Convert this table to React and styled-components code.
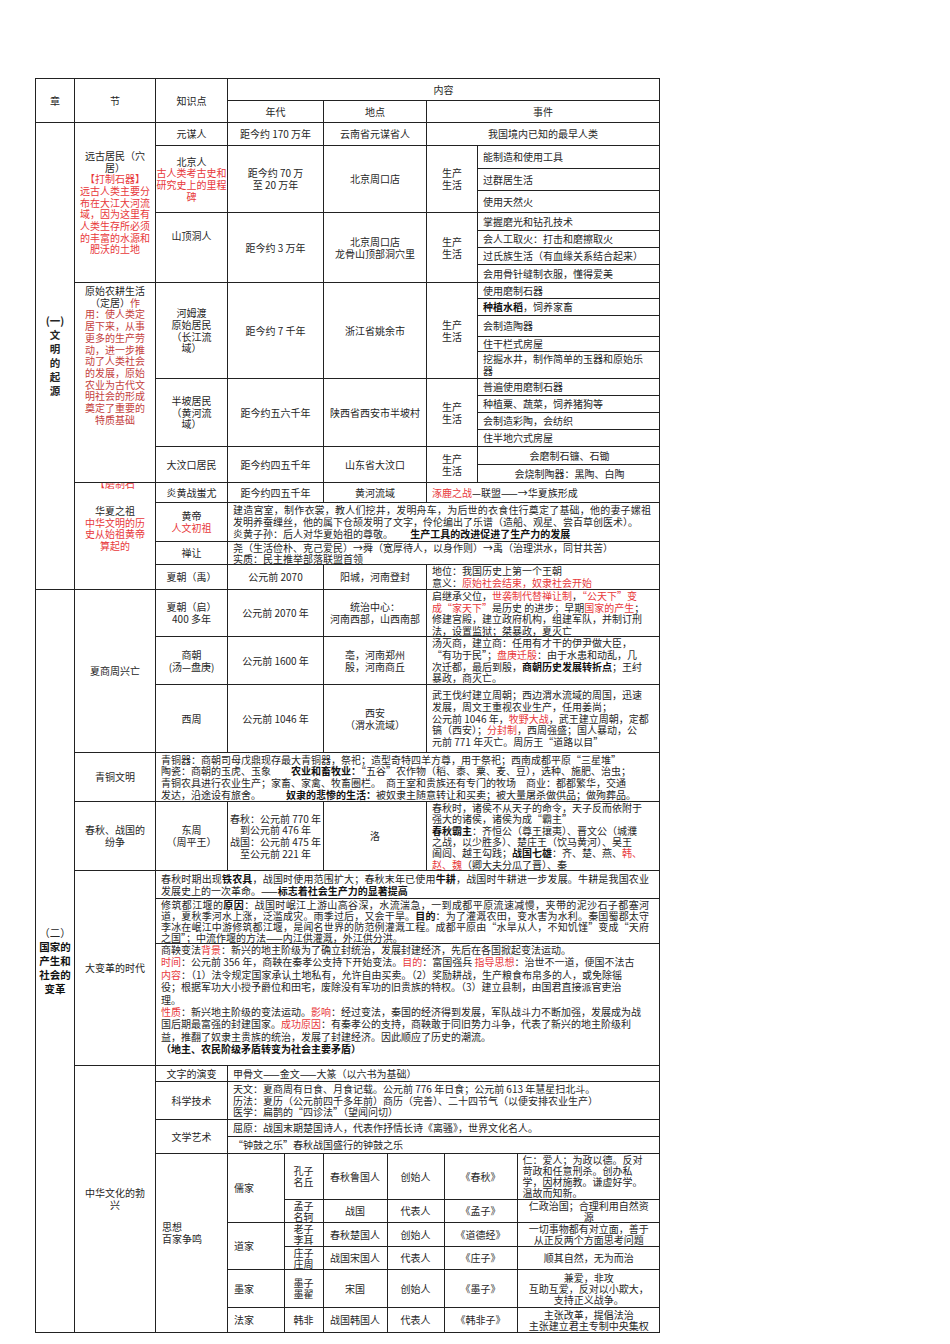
import React from 'react'
import styled, { createGlobalStyle } from 'styled-components'

const GlobalStyle = createGlobalStyle`
  html, body {
    margin: 0;
    padding: 0;
    background: #fff;
  }
  body {
    font-family: "Noto Sans CJK SC", "Noto Sans", sans-serif;
    color: #262626;
  }
`

const Page = styled.div`
  width: 950px;
  min-height: 1344px;
  box-sizing: border-box;
  padding: 78px 0 0 35px;
`

const Sheet = styled.table`
  width: 624px;
  table-layout: fixed;
  border-collapse: collapse;
  font-size: 10px;
  line-height: 11.7px;
`

const Inner = styled(Sheet)`
  width: 100%;
  border-style: hidden;
  line-height: 11px;
`

const Col = styled.col`
  width: ${p => p.$w}px;
`

const Row = styled.tr`
  height: ${p => p.$h}px;
`

const Cell = styled.td`
  border: 1px solid #222;
  padding: ${p => p.$pad || '0 4px'};
  text-align: ${p => p.$align || 'center'};
  vertical-align: ${p => p.$valign || 'middle'};
  line-height: ${p => p.$lh || 'inherit'};
  white-space: ${p => (p.$nowrap ? 'nowrap' : 'normal')};
  font-weight: 400;
  overflow: hidden;
`

const Item = styled(Cell)`
  text-align: ${p => p.$align || 'left'};
  padding: ${p => p.$pad || '0 3px 0 5px'};
`

const Para = styled(Cell)`
  text-align: justify;
  padding: ${p => p.$pad || '0 10px 0 5px'};
`

const Holder = styled(Cell)`
  padding: 0;
  vertical-align: top;
`

const Chapter = styled(Cell)`
  font-size: 10.5px;
  line-height: 14px;
  font-weight: ${p => (p.$bold ? 700 : 400)};
  padding: 0 2px;
`

const Red = styled.span`
  color: ${p => (p.$dark ? '#c4403d' : '#e8383b')};
`

const B = styled.b`
  font-weight: 700;
  color: #111;
`

const Torn = styled.div`
  height: 6px;
  overflow: hidden;
  text-align: center;
  color: #e8383b;

  & > span {
    display: block;
    margin-top: -5px;
  }
`

const Lead = styled.div`
  margin-top: 16px;
`

const Life = () => (
  <>
    生产<br />生活
  </>
)

const Thoughts = () => (
  <Inner>
    <colgroup>
      <Col $w={56} />
      <Col $w={39} />
      <Col $w={64} />
      <Col $w={57} />
      <Col $w={73} />
      <Col $w={143} />
    </colgroup>
    <tbody>
      <Row $h={45}>
        <Cell rowSpan={2} $align='left' $pad='0 6px'>儒家</Cell>
        <Cell $pad='0'>孔子<br />名丘</Cell>
        <Cell>春秋鲁国人</Cell>
        <Cell>创始人</Cell>
        <Cell>《春秋》</Cell>
        <Cell $align='left' $pad='0 4px 0 5px' $nowrap>
          仁：爱人；为政以德。反对<br />
          苛政和任意刑杀。创办私<br />
          学，因材施教。谦虚好学。<br />
          温故而知新。
        </Cell>
      </Row>
      <Row $h={23}>
        <Cell $pad='0'>孟子<br />名轲</Cell>
        <Cell>战国</Cell>
        <Cell>代表人</Cell>
        <Cell>《孟子》</Cell>
        <Cell $pad='0 2px'>仁政治国；合理利用自然资<br />源</Cell>
      </Row>
      <Row $h={24}>
        <Cell rowSpan={2} $align='left' $pad='0 6px'>道家</Cell>
        <Cell $pad='0'>老子<br />李耳</Cell>
        <Cell>春秋楚国人</Cell>
        <Cell>创始人</Cell>
        <Cell>《道德经》</Cell>
        <Cell $pad='0 2px'>一切事物都有对立面，善于<br />从正反两个方面思考问题</Cell>
      </Row>
      <Row $h={23}>
        <Cell $pad='0'>庄子<br />庄周</Cell>
        <Cell>战国宋国人</Cell>
        <Cell>代表人</Cell>
        <Cell>《庄子》</Cell>
        <Cell>顺其自然，无为而治</Cell>
      </Row>
      <Row $h={38}>
        <Cell $align='left' $pad='0 6px'>墨家</Cell>
        <Cell $pad='0'>墨子<br />墨翟</Cell>
        <Cell>宋国</Cell>
        <Cell>创始人</Cell>
        <Cell>《墨子》</Cell>
        <Cell $pad='0 2px'>兼爱，非攻<br />互助互爱，反对以小欺大，<br />支持正义战争。</Cell>
      </Row>
      <Row $h={25}>
        <Cell $align='left' $pad='0 6px'>法家</Cell>
        <Cell $pad='0'>韩非</Cell>
        <Cell>战国韩国人</Cell>
        <Cell>代表人</Cell>
        <Cell>《韩非子》</Cell>
        <Cell $pad='0 2px'>主张改革，提倡法治<br />主张建立君主专制中央集权</Cell>
      </Row>
    </tbody>
  </Inner>
)

const App = () => (
  <Page>
    <GlobalStyle />
    <Sheet>
      <colgroup>
        <Col $w={39} />
        <Col $w={81} />
        <Col $w={72} />
        <Col $w={96} />
        <Col $w={103} />
        <Col $w={51} />
        <Col $w={182} />
      </colgroup>
      <thead>
        <Row $h={22}>
          <Cell as='th' rowSpan={2}>章</Cell>
          <Cell as='th' rowSpan={2}>节</Cell>
          <Cell as='th' rowSpan={2}>知识点</Cell>
          <Cell as='th' colSpan={4}>内容</Cell>
        </Row>
        <Row $h={22}>
          <Cell as='th'>年代</Cell>
          <Cell as='th'>地点</Cell>
          <Cell as='th' colSpan={2}>事件</Cell>
        </Row>
      </thead>
      <tbody>
        {/* (一) 文明的起源 */}
        <Row $h={23}>
          <Chapter rowSpan={23} $bold>(一)<br />文<br />明<br />的<br />起<br />源</Chapter>
          <Cell rowSpan={8} $pad='0 3px'>
            远古居民（穴居）<br />
            <Red>【打制石器】</Red><br />
            <Red>远古人类主要分布在大江大河流域，因为这里有人类生存所必须的丰富的水源和肥沃的土地</Red>
          </Cell>
          <Cell>元谋人</Cell>
          <Cell>距今约 170 万年</Cell>
          <Cell>云南省元谋省人</Cell>
          <Cell colSpan={2}>我国境内已知的最早人类</Cell>
        </Row>

        <Row $h={23}>
          <Cell rowSpan={3} $pad='0'>北京人<br /><Red>古人类考古史和研究史上的里程碑</Red></Cell>
          <Cell rowSpan={3}>距今约 70 万<br />至 20 万年</Cell>
          <Cell rowSpan={3}>北京周口店</Cell>
          <Cell rowSpan={3}><Life /></Cell>
          <Item>能制造和使用工具</Item>
        </Row>
        <Row $h={22}><Item>过群居生活</Item></Row>
        <Row $h={22}><Item>使用天然火</Item></Row>

        <Row $h={18}>
          <Cell rowSpan={4} $pad='0 7px 24px'>山顶洞人</Cell>
          <Cell rowSpan={4}>距今约 3 万年</Cell>
          <Cell rowSpan={4}>北京周口店<br />龙骨山顶部洞穴里</Cell>
          <Cell rowSpan={4}><Life /></Cell>
          <Item>掌握磨光和钻孔技术</Item>
        </Row>
        <Row $h={17}><Item>会人工取火：打击和磨擦取火</Item></Row>
        <Row $h={17}><Item>过氏族生活（有血缘关系结合起来）</Item></Row>
        <Row $h={18}><Item>会用骨针缝制衣服，懂得爱美</Item></Row>

        <Row $h={16}>
          <Cell rowSpan={11} $valign='top' $pad='2px 7px 0'>
            原始农耕生活（定居）<Red $dark>作用：使人类定居下来，从事更多的生产劳动，进一步推动了人类社会的发展，原始农业为古代文明社会的形成奠定了重要的特质基础</Red>
          </Cell>
          <Cell rowSpan={5} $pad='0 4px'>河姆渡<br />原始居民<br />（长江流<br />域）</Cell>
          <Cell rowSpan={5}>距今约 7 千年</Cell>
          <Cell rowSpan={5}>浙江省姚余市</Cell>
          <Cell rowSpan={5}><Life /></Cell>
          <Item>使用磨制石器</Item>
        </Row>
        <Row $h={17}><Item><B>种植水稻</B>，饲养家畜</Item></Row>
        <Row $h={21}><Item>会制造陶器</Item></Row>
        <Row $h={15}><Item>住干栏式房屋</Item></Row>
        <Row $h={27}><Item>挖掘水井，制作简单的玉器和原始乐<br />器</Item></Row>

        <Row $h={17}>
          <Cell rowSpan={4} $pad='0 4px'>半坡居民<br />（黄河流<br />域）</Cell>
          <Cell rowSpan={4}>距今约五六千年</Cell>
          <Cell rowSpan={4}>陕西省西安市半坡村</Cell>
          <Cell rowSpan={4}><Life /></Cell>
          <Item>普遍使用磨制石器</Item>
        </Row>
        <Row $h={17}><Item>种植粟、蔬菜，饲养猪狗等</Item></Row>
        <Row $h={17}><Item>会制造彩陶，会纺织</Item></Row>
        <Row $h={17}><Item>住半地穴式房屋</Item></Row>

        <Row $h={18}>
          <Cell rowSpan={2}>大汶口居民</Cell>
          <Cell rowSpan={2}>距今约四五千年</Cell>
          <Cell rowSpan={2}>山东省大汶口</Cell>
          <Cell rowSpan={2}><Life /></Cell>
          <Item $align='center'>会磨制石镰、石锄</Item>
        </Row>
        <Row $h={18}><Item $align='center'>会烧制陶器：黑陶、白陶</Item></Row>

        <Row $h={20}>
          <Cell rowSpan={4} $valign='top' $pad='0 7px'>
            <Torn><span>【磨制石</span></Torn>
            <Lead>华夏之祖<br /><Red>中华文明的历史从始祖黄帝算起的</Red></Lead>
          </Cell>
          <Cell>炎黄战蚩尤</Cell>
          <Cell>距今约四五千年</Cell>
          <Cell>黄河流域</Cell>
          <Item colSpan={2}><Red>涿鹿之战</Red>—联盟——→华夏族形成</Item>
        </Row>
        <Row $h={39}>
          <Cell>黄帝<br /><Red>人文初祖</Red></Cell>
          <Para colSpan={4} $pad='0 8px 0 5px'>
            建造宫室，制作衣裳，教人们挖井，发明舟车，为后世的衣食住行奠定了基础，他的妻子嫘祖发明养蚕缫丝，他的属下仓颉发明了文字，伶伦编出了乐谱（造船、观星、尝百草创医术）。<br />
            炎黄子孙：后人对华夏始祖的尊敬。　　 <B>生产工具的改进促进了生产力的发展</B>
          </Para>
        </Row>
        <Row $h={22}>
          <Cell>禅让</Cell>
          <Para colSpan={4} $lh='11px'>
            尧（生活俭朴、克己爱民）→舜（宽厚待人，以身作则）→禹（治理洪水，同甘共苦）<br />
            实质：民主推举部落联盟首领
          </Para>
        </Row>
        <Row $h={25}>
          <Cell>夏朝（禹）</Cell>
          <Cell>公元前 2070</Cell>
          <Cell>阳城，河南登封</Cell>
          <Item colSpan={2}>
            地位：我国历史上第一个王朝<br />
            意义：<Red>原始社会结束，奴隶社会开始</Red>
          </Item>
        </Row>

        {/* (二) 国家的产生和社会的变革 */}
        <Row $h={46}>
          <Chapter rowSpan={14}>（二）<br /><B>国家的<br />产生和<br />社会的<br />变革</B></Chapter>
          <Cell rowSpan={3} $pad='0 8px'>夏商周兴亡</Cell>
          <Cell>夏朝（启）<br />400 多年</Cell>
          <Cell>公元前 2070 年</Cell>
          <Cell>统治中心：<br />河南西部，山西南部</Cell>
          <Item colSpan={2} $nowrap $lh='11.5px'>
            启继承父位，<Red>世袭制代替禅让制</Red>，<Red>“公天下”变</Red><br />
            <Red>成“家天下”</Red>是历史 的进步；早期<Red>国家的产生</Red>；<br />
            修建宫殿，建立政府机构，组建军队，并制订刑<br />
            法，设置监狱；桀暴政，夏灭亡
          </Item>
        </Row>
        <Row $h={48}>
          <Cell>商朝<br />(汤—盘庚)</Cell>
          <Cell>公元前 1600 年</Cell>
          <Cell>亳，河南郑州<br />殷，河南商丘</Cell>
          <Item colSpan={2} $nowrap>
            汤灭商，建立商：任用有才干的伊尹做大臣，<br />
            “有功于民”；<Red>盘庚迁殷</Red>：由于水患和动乱，几<br />
            次迁都，最后到殷，<B>商朝历史发展转折点</B>；王纣<br />
            暴政，商灭亡。
          </Item>
        </Row>
        <Row $h={68}>
          <Cell>西周</Cell>
          <Cell>公元前 1046 年</Cell>
          <Cell>西安<br />（渭水流域）</Cell>
          <Item colSpan={2} $nowrap>
            武王伐纣建立周朝；西边渭水流域的周国，迅速<br />
            发展，周文王重视农业生产，任用姜尚；<br />
            公元前 1046 年，<Red>牧野大战</Red>，武王建立周朝，定都<br />
            镐（西安）；<Red>分封制</Red>，西周强盛；国人暴动，公<br />
            元前 771 年灭亡。周厉王“道路以目”
          </Item>
        </Row>
        <Row $h={49}>
          <Cell $pad='0 8px'>青铜文明</Cell>
          <Item colSpan={5} $nowrap>
            青铜器：商朝司母戊鼎现存最大青铜器，祭祀；造型奇特四羊方尊，用于祭祀；西南成都平原“三星堆”<br />
            陶瓷：商朝的玉虎、玉象　　<B>农业和畜牧业：</B>“五谷”农作物（稻、黍、粟、麦、豆），选种、施肥、治虫；<br />
            青铜农具进行农业生产；家畜、家禽、牧畜圈栏。　商王室和贵族还有专门的牧场　商业：都都繁华，交通<br />
            发达，沿途设有旅舍。　　　<B>奴隶的悲惨的生活：</B>被奴隶主随意转让和买卖；被大量屠杀做供品；做殉葬品。
          </Item>
        </Row>
        <Row $h={69}>
          <Cell $pad='0 8px'>春秋、战国的纷争</Cell>
          <Cell>东周<br />（周平王）</Cell>
          <Cell $pad='0 1px'>春秋：公元前 770 年<br />到公元前 476 年<br />战国：公元前 475 年<br />至公元前 221 年</Cell>
          <Cell>洛</Cell>
          <Item colSpan={2} $nowrap $lh='11.3px'>
            春秋时，诸侯不从天子的命令，天子反而依附于<br />
            强大的诸侯，诸侯为成“霸主”<br />
            <B>春秋霸主</B>：齐恒公（尊王攘夷）、晋文公（城濮<br />
            之战，以少胜多）、楚庄王（饮马黄河）、吴王<br />
            阖闾、越王勾践；<B>战国七雄</B>：齐、楚、燕、<Red>韩、</Red><br />
            <Red>赵、魏</Red>（卿大夫分瓜了晋）、秦
          </Item>
        </Row>
        <Row $h={28}>
          <Cell rowSpan={3} $pad='0 8px'>大变革的时代</Cell>
          <Para colSpan={5}>
            春秋时期出现<B>铁农具</B>，战国时使用范围扩大；春秋末年已使用<B>牛耕</B>，战国时牛耕进一步发展。牛耕是我国农业发展史上的一次革命。——<B>标志着社会生产力的显著提高</B>
          </Para>
        </Row>
        <Row $h={44}>
          <Para colSpan={5} $lh='11px'>
            修筑都江堰的<B>原因</B>：战国时岷江上游山高谷深，水流湍急，一到成都平原流速减慢，夹带的泥沙石子都塞河道，夏秋季河水上涨，泛滥成灾。雨季过后，又会干旱。<B>目的</B>：为了灌溉农田，变水害为水利。秦国蜀郡太守李冰在岷江中游修筑都江堰，是闻名世界的防范例灌溉工程。成都平原由“水旱从人，不知饥馑”变成“天府之国”；中流作堰的方法——内江供灌溉，外江供分洪。
          </Para>
        </Row>
        <Row $h={122}>
          <Item colSpan={5} $valign='top' $lh='12.4px' $nowrap>
            商鞅变法<Red>背景</Red>：新兴的地主阶级为了确立封统治，发展封建经济，先后在各国掀起变法运动。<br />
            <Red>时间</Red>：公元前 356 年，商鞅在秦孝公支持下开始变法。<Red>目的</Red>：富国强兵 <Red>指导思想</Red>：治世不一道，便国不法古<br />
            <Red>内容</Red>：（1）法令规定国家承认土地私有，允许自由买卖。（2）奖励耕战，生产粮食布帛多的人，或免除徭<br />
            役；根据军功大小授予爵位和田宅，废除没有军功的旧贵族的特权。（3）建立县制，由国君直接派官吏治<br />
            理。<br />
            <Red>性质</Red>：新兴地主阶级的变法运动。<Red>影响</Red>：经过变法，秦国的经济得到发展，军队战斗力不断加强，发展成为战<br />
            国后期最富强的封建国家。<Red>成功原因</Red>：有秦孝公的支持，商鞅敢于同旧势力斗争，代表了新兴的地主阶级利<br />
            益，推翻了奴隶主贵族的统治，发展了封建经济。因此顺应了历史的潮流。<br />
            <B>（地主、农民阶级矛盾转变为社会主要矛盾）</B>
          </Item>
        </Row>
        <Row $h={16}>
          <Cell rowSpan={5} $pad='0 8px'>中华文化的勃兴</Cell>
          <Cell>文字的演变</Cell>
          <Item colSpan={4}>甲骨文——金文——大篆（以六书为基础）</Item>
        </Row>
        <Row $h={38}>
          <Cell>科学技术</Cell>
          <Item colSpan={4}>
            天文：夏商周有日食、月食记载。公元前 776 年日食；公元前 613 年慧星扫北斗。<br />
            历法：夏历（公元前四千多年前）商历（完善）、二十四节气（以便安排农业生产）<br />
            医学：扁鹊的“四诊法”（望闻问切）
          </Item>
        </Row>
        <Row $h={17}>
          <Cell rowSpan={2}>文学艺术</Cell>
          <Item colSpan={4}>屈原：战国末期楚国诗人，代表作抒情长诗《离骚》，世界文化名人。</Item>
        </Row>
        <Row $h={17}>
          <Item colSpan={4}>“钟鼓之乐”春秋战国盛行的钟鼓之乐</Item>
        </Row>
        <Row $h={178}>
          <Cell $align='left' $pad='0 6px 20px'>思想<br />百家争鸣</Cell>
          <Holder colSpan={4}>
            <Thoughts />
          </Holder>
        </Row>
      </tbody>
    </Sheet>
  </Page>
)

export default App
